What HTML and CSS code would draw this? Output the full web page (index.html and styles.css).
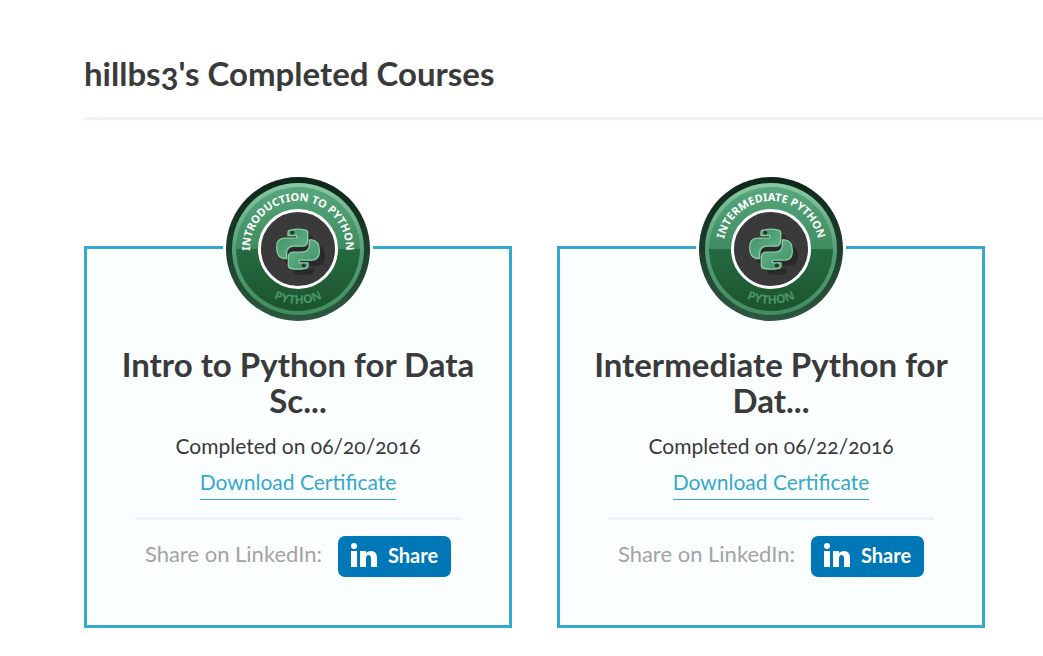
FILE: index.html
```html
<!DOCTYPE html>
<html lang="en">
<head>
<meta charset="utf-8">
<meta name="viewport" content="width=device-width, initial-scale=1">
<title>Completed Courses</title>
<link rel="stylesheet" href="styles.css">
</head>
<body>
<svg class="defs" width="0" height="0" aria-hidden="true">
  <defs>
    <linearGradient id="rim" x1="0" y1="0" x2="0" y2="1"><stop offset="0" stop-color="#0e2519"/><stop offset="1" stop-color="#2e573f"/></linearGradient>
    <linearGradient id="edge" x1="0" y1="0" x2="0" y2="1"><stop offset="0" stop-color="#88c9a4"/><stop offset=".5" stop-color="#56a077"/><stop offset="1" stop-color="#3f8c60"/></linearGradient>
    <linearGradient id="upper" x1="0" y1="0" x2="0" y2="1"><stop offset="0" stop-color="#57a67c"/><stop offset="1" stop-color="#3f8c60"/></linearGradient>
    <linearGradient id="lower" x1="0" y1="0" x2="0" y2="1"><stop offset="0" stop-color="#256a41"/><stop offset="1" stop-color="#1b532d"/></linearGradient>
    <linearGradient id="skin" x1="0" y1="0" x2="1" y2="1"><stop offset="0" stop-color="#3f8f64"/><stop offset="1" stop-color="#67b58b"/></linearGradient>
    <path id="arc-top" d="M27 77V75A48 48 0 0 1 123 75V77"/>
    <path id="arc-bottom" d="M20 75A55 55 0 0 0 130 75"/>
    <path id="snake" d="M54 42V34Q54 25 64 25Q84 21 104 25Q113 26 113 34V58Q113 74 98 74H74Q50 74 50 96V111H42Q20 108 20 78Q20 50 44 50H80V42Z"/>
    <g id="badge">
      <circle cx="75" cy="75" r="72" fill="url(#rim)"/>
      <circle cx="75" cy="75" r="66" fill="url(#edge)"/>
      <path d="M13 75A62 62 0 0 1 137 75Z" fill="url(#upper)"/>
      <path d="M13 75A62 62 0 0 0 137 75Z" fill="url(#lower)"/>
      <circle cx="75" cy="75" r="38.5" fill="#3a3a3a" stroke="#fff" stroke-width="3"/>
      <g transform="translate(47 47.5) scale(.3333)">
        <g fill="#292929" transform="translate(17 17)">
          <use href="#snake"/><use href="#snake" transform="rotate(180 84 83)"/>
        </g>
        <g fill="url(#skin)" stroke="#86cda7" stroke-width="4" stroke-linejoin="round">
          <use href="#snake"/><use href="#snake" transform="rotate(180 84 83)"/>
        </g>
        <circle cx="67" cy="34" r="6" fill="#303030"/><circle cx="101" cy="132" r="6" fill="#303030"/>
      </g>
    </g>
    <g id="in">
      <circle cx="3" cy="3" r="3"/>
      <path d="M0 8H6V24H0ZM9 8H15V10Q17 8 20 8Q26 8 26 15V24H20V16Q20 12 17.500 12Q15 12 15 16V24H9Z"/>
    </g>
  </defs>
</svg>
<main class="profile">
  <h1 class="profile-title">hillbs3's Completed Courses</h1>
  <div class="courses">
    <article class="course">
      <svg class="badge" viewBox="0 0 150 150">
        <path class="badge-gap" d="M0 71H150V75H0Z"/>
        <use href="#badge"/>
        <text class="badge-name"><textPath href="#arc-top" startOffset="50%">INTRODUCTION TO PYTHON</textPath></text>
        <text class="badge-track"><textPath href="#arc-bottom" startOffset="50%">PYTHON</textPath></text>
      </svg>
      <h2 class="course-title">Intro to Python for Data Sc...</h2>
      <p class="course-date">Completed on 06/20/2016</p>
      <a class="course-link" href="#">Download Certificate</a>
      <div class="share">
        <span class="share-label">Share on LinkedIn:</span>
        <button class="share-button" type="button"><svg class="share-icon" viewBox="0 0 26 24" aria-hidden="true"><use href="#in"/></svg>Share</button>
      </div>
    </article>
    <article class="course">
      <svg class="badge" viewBox="0 0 150 150">
        <path class="badge-gap" d="M0 71H150V75H0Z"/>
        <use href="#badge"/>
        <text class="badge-name"><textPath href="#arc-top" startOffset="50%">INTERMEDIATE PYTHON</textPath></text>
        <text class="badge-track"><textPath href="#arc-bottom" startOffset="50%">PYTHON</textPath></text>
      </svg>
      <h2 class="course-title">Intermediate Python for Dat...</h2>
      <p class="course-date">Completed on 06/22/2016</p>
      <a class="course-link" href="#">Download Certificate</a>
      <div class="share">
        <span class="share-label">Share on LinkedIn:</span>
        <button class="share-button" type="button"><svg class="share-icon" viewBox="0 0 26 24" aria-hidden="true"><use href="#in"/></svg>Share</button>
      </div>
    </article>
  </div>
</main>
</body>
</html>
```
FILE: styles.css
```css
* { box-sizing: border-box; }

body {
  margin: 0;
  background: #fff;
  color: #3a3a3a;
  font: 21px/36px Lato, "Open Sans", sans-serif;
  font-variant-numeric: oldstyle-nums;
}

.defs { position: absolute; }

.profile { padding: 55px 0 28px 84px; }

.profile-title {
  margin: 0;
  padding-bottom: 26px;
  border-bottom: 3px solid #ebf4f7;
  font-size: 33px;
  line-height: 36px;
}

.courses {
  display: grid;
  grid-template-columns: repeat(auto-fit, minmax(380px, 1fr));
  gap: 45px;
  padding: 126px 58px 0 0;
}

.course {
  display: flex;
  flex-direction: column;
  align-items: center;
  padding: 0 32px 48px;
  border: 3px solid #36a8cb;
  background: #fbfeff;
  text-align: center;
}

.badge {
  width: 150px;
  height: 150px;
  margin: -75px 0 22px;
}

.badge-gap { fill: #fff; }

.badge-name,
.badge-track {
  font: bold 11px "Noto Sans", sans-serif;
  text-anchor: middle;
  fill: #fff;
}

.badge-track {
  font-size: 12px;
  fill: #4a9469;
}

.course-title {
  margin: 0 0 10px;
  font-size: 33px;
  line-height: 36px;
}

.course-date { margin: 0; }

.course-link {
  height: 36px;
  border-bottom: 1px solid #36a8cb;
  color: #36a8cb;
  text-decoration: none;
}

.share {
  display: flex;
  align-items: flex-start;
  align-self: stretch;
  justify-content: center;
  gap: 16px;
  margin: 17px 16px 0;
  padding-top: 16px;
  border-top: 3px solid #ebf4f7;
}

.share-label {
  color: #a3a3a3;
  font-size: 22px;
  white-space: nowrap;
}

.share-button {
  display: flex;
  align-items: center;
  gap: 11px;
  height: 41px;
  padding: 0 13px 3px;
  border: 0;
  border-radius: 7px;
  background: #0077b7;
  color: #fff;
  font: bold 20px Lato, "Open Sans", sans-serif;
}

.share-icon {
  width: 26px;
  height: 24px;
  fill: #fff;
}
```
